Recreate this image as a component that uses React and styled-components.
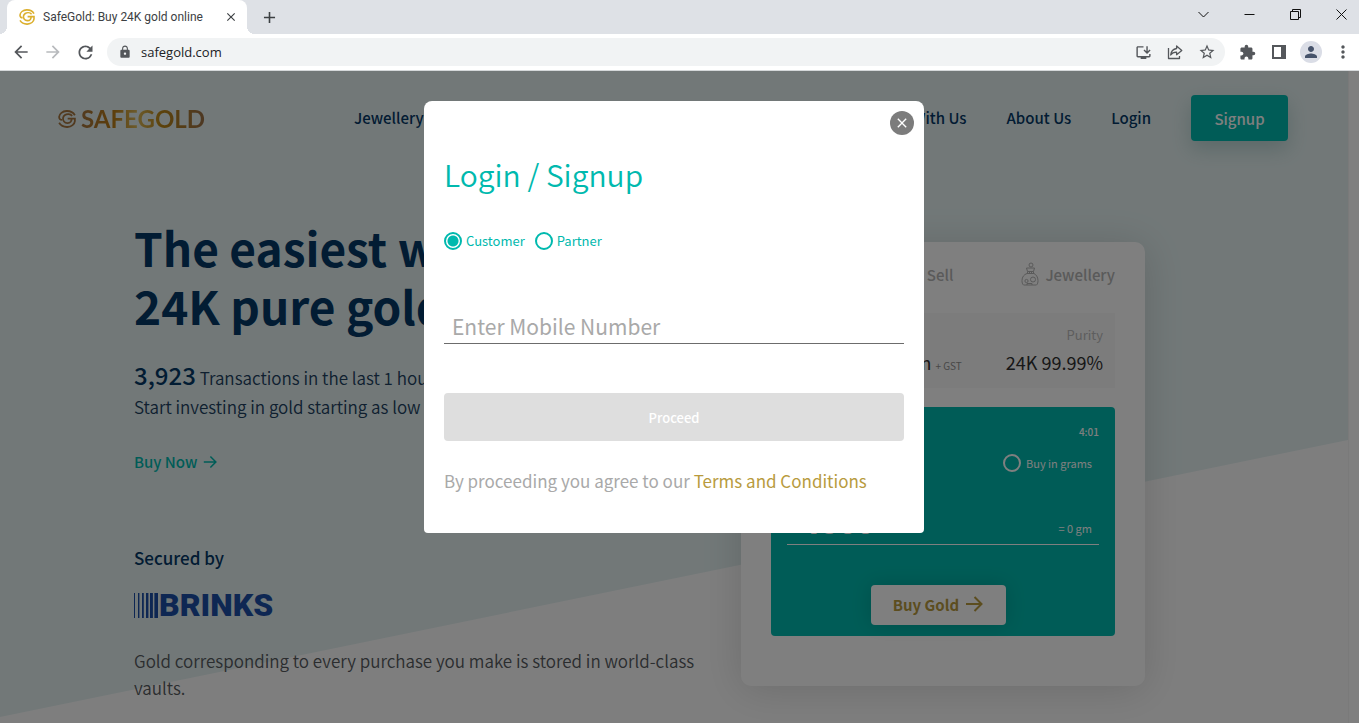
import React from 'react';
import styled, { createGlobalStyle } from 'styled-components';
import {
  MdAdd, MdArrowBack, MdArrowForward, MdClose, MdExtension, MdInstallDesktop,
  MdLock, MdMoreVert, MdPerson, MdRefresh, MdStarBorder
} from 'react-icons/md';

const teal = '#00b9ae'
const navy = '#043866'
const gold = '#b89b3e'

const GlobalStyle = createGlobalStyle`
* {
  box-sizing: border-box;
}
body {
  margin: 0;
  overflow: hidden;
  font-family: "Noto Sans CJK JP", "Noto Sans", sans-serif;
}
button, input {
  font-family: inherit;
}
h1, h2, p {
  margin: 0;
}
a {
  color: inherit;
  text-decoration: none;
}
`

const Window = styled.div`
height: 100vh;
display: flex;
flex-direction: column;
`

/* browser frame */
const TabStrip = styled.header`
display: flex;
flex: none;
height: 34px;
padding-left: 7px;
background: #dee1e6;
`

const Tab = styled.div`
position: relative;
display: flex;
align-items: center;
width: 240px;
padding: 0 8px 0 12px;
background: white;
border-radius: 8px 8px 0 0;
font: 12px/16px Roboto, "Open Sans", sans-serif;
color: #3c4043;

&::before, &::after {
  content: '';
  position: absolute;
  bottom: 0;
  width: 8px;
  height: 8px;
}
&::before {
  left: -8px;
  background: radial-gradient(circle at 0 0, transparent 8px, white 8px);
}
&::after {
  right: -8px;
  background: radial-gradient(circle at 100% 0, transparent 8px, white 8px);
}
`

const TabTitle = styled.span`
flex-grow: 1;
margin-left: 8px;
white-space: nowrap;
`

const IconButton = styled.button`
display: flex;
flex: none;
align-items: center;
justify-content: center;
width: ${props => props.$width || 32}px;
height: ${props => props.$height || 28}px;
padding: 0;
border: none;
background: none;
color: ${props => props.$color || '#54575b'};
`

const WindowControls = styled.div`
display: flex;
margin-left: auto;
margin-right: -5px;
`

const Toolbar = styled.div`
display: flex;
flex: none;
align-items: center;
height: 37px;
padding-left: 5px;
background: white;
border-bottom: 1px solid #d5d8da;
`

const AddressBar = styled.div`
display: flex;
flex-grow: 1;
align-items: center;
height: 28px;
margin: 0 6px;
padding: 0 2px 0 11px;
border-radius: 14px;
background: #f1f3f4;
color: #54575b;
`

const AddressInput = styled.input`
flex-grow: 1;
margin-left: 9px;
padding: 0;
border: none;
outline: none;
background: none;
font: 13px/20px "Open Sans", sans-serif;
color: #202124;
`

const Avatar = styled.span`
display: flex;
align-items: center;
justify-content: center;
width: 22px;
height: 22px;
border-radius: 50%;
background: #dadde6;
color: #46536b;
`

/* site */
const Viewport = styled.div`
position: relative;
display: flex;
flex-grow: 1;
min-height: 0;
overflow: hidden;
`

const Page = styled.div`
position: relative;
flex-grow: 1;
min-width: 0;
background: #fdfdfd;
`

const Slope = styled.div`
position: absolute;
inset: 0 0 auto 0;
height: 646px;
background: #e4f1f1;
clip-path: polygon(0 0, 100% 0, 100% 369px, 0 100%);
`

const ScrollGutter = styled.div`
flex: none;
width: 11px;
background: white;
box-shadow: inset 1px 0 0 #f4f4f4;
`

const SiteHeader = styled.header`
position: relative;
display: flex;
align-items: center;
padding: 24px 60px 0 58px;
`

const Brand = styled.a`
display: flex;
align-items: center;
gap: 5px;
width: 296px;
padding-top: 2px;
`

const BrandName = styled.span`
font: 700 24px/28px Lato, sans-serif;
background: linear-gradient(90deg, #a5753f, #b87a14 25%, #d9b75a 45%, #b98414 65%, #9a7048);
background-clip: text;
color: transparent;
`

const Nav = styled.nav`
display: flex;
flex-grow: 1;
align-items: center;
gap: 40px;
font-size: 15px;
font-weight: 500;
line-height: 24px;
color: ${navy};
white-space: nowrap;
`

const NavGroup = styled.div`
display: flex;
flex-grow: 1;
gap: 40px;
`

const SignupButton = styled.button`
width: 97px;
height: 46px;
padding: 0;
border: none;
border-radius: 4px;
background: ${teal};
box-shadow: 0 8px 20px rgba(0, 90, 85, 0.2);
color: white;
font-size: 15px;
font-weight: 500;
`

const Hero = styled.main`
position: relative;
display: grid;
grid-template-columns: 1fr 404px;
gap: 24px;
padding: 77px 203px 0 134px;
`

const Headline = styled.h1`
font-size: 46px;
font-weight: 700;
line-height: 58px;
color: ${navy};
white-space: nowrap;
`

const Lead = styled.p`
margin-top: 27px;
font-size: 17px;
font-weight: 350;
line-height: 29px;
color: #204060;
white-space: nowrap;
`

const Count = styled.strong`
font-size: 24px;
font-weight: 500;
line-height: 28px;
color: ${navy};
`

const BuyNow = styled.a`
display: flex;
align-items: center;
gap: 6px;
margin-top: 29px;
font-size: 15px;
font-weight: 500;
line-height: 24px;
color: ${teal};
`

const Secured = styled.p`
margin: 72px 0 21px;
font-size: 17px;
font-weight: 500;
line-height: 24px;
color: ${navy};
`

const Brinks = styled.div`
display: flex;
align-items: center;
gap: 1px;
height: 28px;
font: 900 32px/28px Roboto, "Liberation Sans", sans-serif;
color: #1d4fa6;
`

const VaultText = styled.p`
margin-top: 28px;
font-size: 17px;
font-weight: 350;
line-height: 27px;
color: #565a5e;
`

const TradeCard = styled.section`
align-self: start;
margin-top: 24px;
padding: 19px 30px 50px;
border-radius: 10px;
background: white;
box-shadow: 0 4px 40px rgba(0, 0, 0, 0.14);
`

const CardTabs = styled.div`
display: flex;
justify-content: flex-end;
gap: 68px;
`

const CardTab = styled.button`
display: flex;
align-items: center;
gap: 6px;
height: 26px;
padding: 0;
border: none;
background: none;
font-size: 15px;
font-weight: 500;
color: #b4b4b4;
`

const PriceBox = styled.div`
display: flex;
justify-content: flex-end;
gap: 44px;
margin-top: 26px;
padding: 10px 12px 11px;
background: #f9f9f9;
font-size: 18px;
line-height: 30px;
color: #303030;
white-space: nowrap;
`

const PriceCell = styled.div`
text-align: ${props => props.$align || 'left'};
`

const PriceLabel = styled.p`
font-size: 13px;
line-height: 24px;
color: #bcbcbc;
`

const Gst = styled.small`
font-size: 10px;
line-height: 10px;
color: #909090;
`

const BuyPanel = styled.form`
margin-top: 19px;
padding: 16px 16px 11px;
border-radius: 4px;
background: ${teal};
color: white;
`

const Timer = styled.p`
font-size: 10px;
font-weight: 500;
line-height: 18px;
text-align: right;
`

const UnitRow = styled.div`
display: flex;
justify-content: flex-end;
gap: 40px;
margin-top: 12px;
padding-right: 7px;
font-size: 11px;
line-height: 20px;
`

const RadioLabel = styled.label`
display: flex;
align-items: center;
gap: ${props => props.$gap || 4}px;
`

const Radio = styled.input.attrs({ type: 'radio' })`
appearance: none;
width: 18px;
height: 18px;
margin: 0;
border: 2px solid currentColor;
border-radius: 50%;
color: inherit;

&:checked {
  background: radial-gradient(circle, currentColor 5px, transparent 6px);
}
`

const AmountRow = styled.div`
display: flex;
align-items: flex-end;
margin-top: 31px;
padding: 0 7px 0 17px;
border-bottom: 1px solid white;
font-size: 11px;
`

const AmountInput = styled.input`
flex-grow: 1;
min-width: 0;
height: 40px;
padding: 0 0 6px;
border: none;
outline: none;
background: none;
font-size: 30px;
font-weight: 700;
line-height: 34px;
color: white;
`

const Grams = styled.span`
flex: none;
padding-bottom: 8px;
line-height: 16px;
white-space: nowrap;
`

const BuyRow = styled.div`
display: flex;
justify-content: center;
margin-top: 40px;
padding-right: 10px;
`

const BuyGold = styled.button`
display: flex;
align-items: center;
justify-content: center;
gap: 6px;
width: 135px;
height: 40px;
padding: 0 0 2px;
border: none;
border-radius: 4px;
background: white;
box-shadow: 0 0 20px rgba(0, 0, 0, 0.15);
color: ${gold};
font-size: 15px;
font-weight: 700;
`

/* login dialog */
const Overlay = styled.div`
position: absolute;
inset: 0;
display: flex;
align-items: flex-start;
justify-content: center;
padding: 30px 11px 0 0;
background: rgba(0, 0, 0, 0.5);
`

const Modal = styled.form`
position: relative;
width: 500px;
padding: 53px 20px 40px;
border-radius: 8px 8px 4px 4px;
background: white;
`

const CloseButton = styled.button`
position: absolute;
top: 10px;
right: 10px;
display: flex;
align-items: center;
justify-content: center;
width: 24px;
height: 24px;
padding: 0;
border: none;
border-radius: 50%;
background: #7c7c7c;
color: white;
`

const ModalTitle = styled.h2`
font-size: 30px;
font-weight: 350;
line-height: 40px;
color: ${teal};
`

const RoleRow = styled.div`
display: flex;
gap: 10px;
margin-top: 37px;
font-size: 13px;
line-height: 20px;
color: ${teal};
`

const MobileInput = styled.input`
display: block;
width: 100%;
height: 34px;
margin-top: 59px;
padding: 0 8px 2px;
border: none;
border-bottom: 1px solid #6c6c6c;
outline: none;
background: none;
font-size: 21px;

&::placeholder {
  color: #a9a9a9;
}
`

const ProceedButton = styled.button`
display: block;
width: 100%;
height: 48px;
margin-top: 49px;
padding: 0;
border: none;
border-radius: 4px;
background: #dedede;
color: white;
font-size: 13px;
font-weight: 500;
`

const Terms = styled.p`
margin-top: 28px;
font-size: 17px;
line-height: 24px;
color: #a9a9a9;

a {
  color: ${gold};
}
`

const CoinLogo = ({ size, color }) => (
  <svg width={size} height={size} viewBox="0 0 16 16" fill="none" stroke={color} strokeWidth="1.6">
    <path d="M15 4.6C13.2 1.6 10.200 .8 7.600 .9 4 1.100 1.200 3.400 1 6.100c-.1 1.700 1 2.700 2.600 2.700" />
    <path d="M1 11.400c1.800 3 4.800 3.800 7.400 3.700 3.600-.2 6.400-2.500 6.600-5.200V7.600H8.600" />
    <path d="M12.600 5.200C11 3.400 8 3.300 6.200 4.500 4.200 5.900 3.900 8.500 5.300 10.200c1.500 1.800 4.600 1.900 6 .2.600-.8.800-1.600.8-2.600" />
  </svg>
)

const ArrowIcon = ({ size, weight }) => (
  <svg width={size} height={size} viewBox="0 0 18 18" fill="none" stroke="currentColor" strokeWidth={weight}>
    <path d="M1 9h15M9.500 2l7 7-7 7" />
  </svg>
)

const ShareIcon = () => (
  <svg width="18" height="18" viewBox="0 0 18 18" fill="none" stroke="currentColor" strokeWidth="1.300" strokeLinejoin="round">
    <path d="M2.500 5v10.500h11V13" />
    <path d="M10.600 3l5.200 4.400-5.200 4.300V9.200C7.800 9.100 6 10 4.700 12c.4-3.600 2.500-6 5.900-6.500z" />
  </svg>
)

const SidePanelIcon = () => (
  <svg width="14" height="14" viewBox="0 0 14 14" fill="currentColor">
    <path d="M0 0h14v14H0zM2 2v10h7V2z" fillRule="evenodd" />
  </svg>
)

const JewelleryIcon = () => (
  <svg width="18" height="24" viewBox="0 0 18 24" fill="none" stroke="currentColor">
    <circle cx="10" cy="3" r="2" />
    <path d="M5.500 6h8l-1 3.500h-6zM6.500 9.500v2M8.500 9.500v2M10.500 9.500v2M12.500 9.500v2" />
    <path d="M6 11.500c-3 1-5 3.500-5 7 0 2 .3 3.500 1.500 4.500h13c1.200-1 1.500-2.500 1.500-4.500 0-3.500-2-6-4-7z" />
    <circle cx="12" cy="17.500" r="2.500" />
    <circle cx="5.500" cy="19" r="1.600" />
    <path d="M6 23v-1.500h5V23" />
  </svg>
)

const BrinksBars = () => (
  <svg width="24" height="25" viewBox="0 0 24 25" fill="currentColor">
    <path d="M0 0h1v25H0zM4 0h1.400v25H4zM8 0h1.800v25H8zM12 0h2.400v25H12zM16 0h2.900v25H16zM20.400 0H24v25h-3.600z" />
  </svg>
)

const WindowIcon = ({ d }) => (
  <svg width="11" height="11" viewBox="0 0 11 11" fill="none" stroke="#111" strokeWidth="1">
    <path d={d} />
  </svg>
)

const controls = [
  { name: 'Search tabs', d: 'M.5 3l5 5 5-5' },
  { name: 'Minimize', d: 'M.5 5.500h10' },
  { name: 'Restore', d: 'M.5 2.500h8v8h-8zM2.500 2.500v-2h8v8h-2' },
  { name: 'Close', d: 'M.5.5l10 10M10.500.5l-10 10' }
]

export default class App extends React.Component {

  state = {
    role: 'customer',
    mobile: '',
    amount: '₹500',
    modalOpen: true
  }

  onChangeRole = (event) => {
    this.setState({ role: event.target.value })
  }

  onChangeMobile = (event) => {
    this.setState({ mobile: event.target.value })
  }

  onChangeAmount = (event) => {
    this.setState({ amount: event.target.value })
  }

  toggleModal = () => {
    this.setState({ modalOpen: !this.state.modalOpen })
  }

  render() {
    return (
      <Window>
        <GlobalStyle />
        <TabStrip>
          <Tab>
            <CoinLogo size={16} color="#dcb02f" />
            <TabTitle>SafeGold: Buy 24K gold online</TabTitle>
            <IconButton $width={16} $height={16} $color="#3c4043" aria-label="Close tab"><MdClose size={14} /></IconButton>
          </Tab>
          <IconButton $width={44} $height={34} $color="#3c4043" aria-label="New tab"><MdAdd size={19} /></IconButton>
          <WindowControls>
            {controls.map((control) => (
              <IconButton key={control.name} $width={46} aria-label={control.name}>
                <WindowIcon d={control.d} />
              </IconButton>
            ))}
          </WindowControls>
        </TabStrip>
        <Toolbar>
          <IconButton aria-label="Back"><MdArrowBack size={20} /></IconButton>
          <IconButton $color="#b8babd" aria-label="Forward"><MdArrowForward size={20} /></IconButton>
          <IconButton aria-label="Reload"><MdRefresh size={21} /></IconButton>
          <AddressBar>
            <MdLock size={14} />
            <AddressInput aria-label="Address" defaultValue="safegold.com" />
            <IconButton aria-label="Install"><MdInstallDesktop size={17} /></IconButton>
            <IconButton aria-label="Share"><ShareIcon /></IconButton>
            <IconButton aria-label="Bookmark"><MdStarBorder size={18} /></IconButton>
          </AddressBar>
          <IconButton aria-label="Extensions"><MdExtension size={17} /></IconButton>
          <IconButton aria-label="Side panel"><SidePanelIcon /></IconButton>
          <IconButton aria-label="Profile"><Avatar><MdPerson size={18} /></Avatar></IconButton>
          <IconButton aria-label="Menu"><MdMoreVert size={20} /></IconButton>
        </Toolbar>

        <Viewport>
          <Page>
            <Slope />
            <SiteHeader>
              <Brand href="#">
                <CoinLogo size={18} color="#a5753f" />
                <BrandName>SAFEGOLD</BrandName>
              </Brand>
              <Nav>
                <NavGroup>
                  <a href="#">Jewellery</a>
                  <a href="#">Gifting</a>
                </NavGroup>
                <a href="#">Partner With Us</a>
                <a href="#">About Us</a>
                <a href="#">Login</a>
                <SignupButton onClick={this.toggleModal}>Signup</SignupButton>
              </Nav>
            </SiteHeader>

            <Hero>
              <div>
                <Headline>The easiest way to buy<br />24K pure gold</Headline>
                <Lead>
                  <Count>3,923</Count> Transactions in the last 1 hour<br />
                  Start investing in gold starting as low as ₹10
                </Lead>
                <BuyNow href="#">Buy Now <ArrowIcon size={14} weight={2} /></BuyNow>
                <Secured>Secured by</Secured>
                <Brinks><BrinksBars />BRINKS</Brinks>
                <VaultText>Gold corresponding to every purchase you make is stored in world-class vaults.</VaultText>
              </div>

              <TradeCard>
                <CardTabs>
                  <CardTab>Buy</CardTab>
                  <CardTab>Sell</CardTab>
                  <CardTab><JewelleryIcon />Jewellery</CardTab>
                </CardTabs>
                <PriceBox>
                  <PriceCell>
                    <PriceLabel>Price</PriceLabel>
                    <p>₹5,210/gm <Gst>+ GST</Gst></p>
                  </PriceCell>
                  <PriceCell $align="right">
                    <PriceLabel>Purity</PriceLabel>
                    <p>24K 99.99%</p>
                  </PriceCell>
                </PriceBox>
                <BuyPanel onSubmit={(event) => event.preventDefault()}>
                  <Timer>4:01</Timer>
                  <UnitRow>
                    <RadioLabel $gap={5}><Radio name="unit" />Buy in grams</RadioLabel>
                  </UnitRow>
                  <AmountRow>
                    <AmountInput aria-label="Amount" value={this.state.amount} onChange={this.onChangeAmount} />
                    <Grams>= 0 gm</Grams>
                  </AmountRow>
                  <BuyRow>
                    <BuyGold>Buy Gold <ArrowIcon size={18} weight={2} /></BuyGold>
                  </BuyRow>
                </BuyPanel>
              </TradeCard>
            </Hero>
          </Page>
          <ScrollGutter />

          {this.state.modalOpen && (
            <Overlay>
              <Modal onSubmit={(event) => event.preventDefault()}>
                <CloseButton type="button" aria-label="Close" onClick={this.toggleModal}><MdClose size={16} /></CloseButton>
                <ModalTitle>Login / Signup</ModalTitle>
                <RoleRow>
                  <RadioLabel>
                    <Radio name="role" value="customer" checked={this.state.role === 'customer'} onChange={this.onChangeRole} />
                    Customer
                  </RadioLabel>
                  <RadioLabel>
                    <Radio name="role" value="partner" checked={this.state.role === 'partner'} onChange={this.onChangeRole} />
                    Partner
                  </RadioLabel>
                </RoleRow>
                <MobileInput
                  aria-label="Mobile number"
                  placeholder="Enter Mobile Number"
                  value={this.state.mobile}
                  onChange={this.onChangeMobile}
                />
                <ProceedButton>Proceed</ProceedButton>
                <Terms>By proceeding you agree to our <a href="#">Terms and Conditions</a></Terms>
              </Modal>
            </Overlay>
          )}
        </Viewport>
      </Window>
    )
  }
}
